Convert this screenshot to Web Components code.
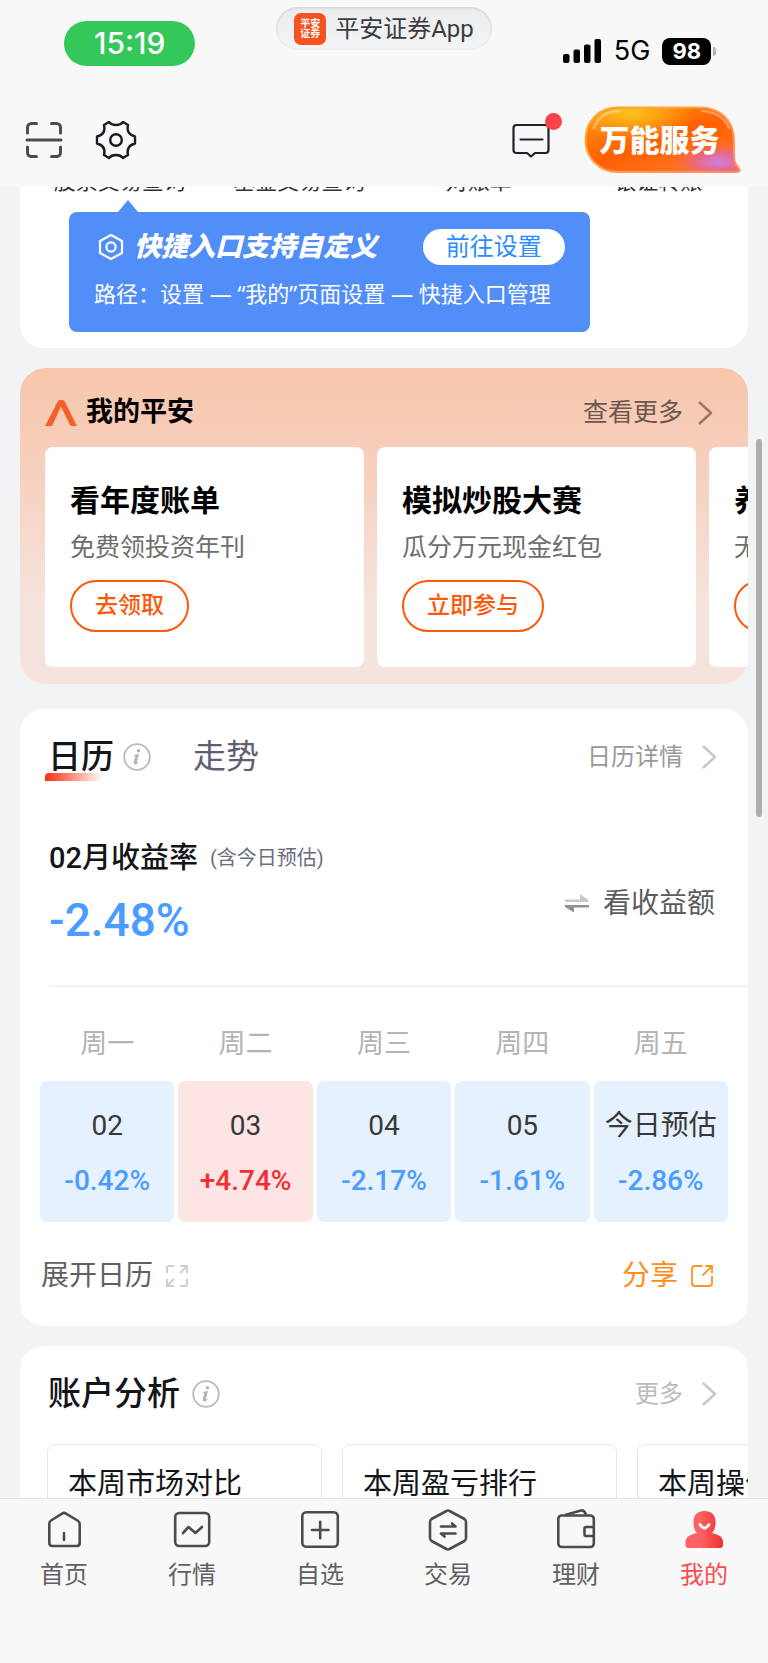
<!DOCTYPE html>
<html lang="zh-CN">
<head>
<meta charset="utf-8">
<meta name="viewport" content="width=device-width, initial-scale=1">
<title>我的</title>
<style>
  body {
    margin: 0;
    background-color: #f2f3f5;
    color: #141519;
    font-family: Roboto, "Noto Sans CJK SC", sans-serif;
    font-size: 24px;
    line-height: 1.5;
    --accent: #fb5a0a;
    --up: #f72d31;
    --down: #4b9cff;
  }
</style>
</head>
<body>
<app-shell>
  <status-bar slot="top" time="15:19" network="5G" battery="98">平安证券App</status-bar>
  <tool-bar slot="top">万能服务</tool-bar>

  <quick-entry>
    <a href="#stock">股票交易查询</a>
    <a href="#fund">基金交易查询</a>
    <a href="#bill">对账单</a>
    <a href="#transfer">银证转账</a>
  </quick-entry>

  <my-pingan>
    <promo-card heading="看年度账单" action="去领取">免费领投资年刊</promo-card>
    <promo-card heading="模拟炒股大赛" action="立即参与">瓜分万元现金红包</promo-card>
    <promo-card heading="养老专区" action="去看看">无忧养老规划</promo-card>
  </my-pingan>

  <profit-calendar></profit-calendar>

  <account-analysis>
    <span>本周市场对比</span>
    <span>本周盈亏排行</span>
    <span>本周操作分析</span>
  </account-analysis>

  <tab-bar slot="bottom">
    <tab-item icon="home">首页</tab-item>
    <tab-item icon="market">行情</tab-item>
    <tab-item icon="watch">自选</tab-item>
    <tab-item icon="trade">交易</tab-item>
    <tab-item icon="wallet">理财</tab-item>
    <tab-item icon="me" active>我的</tab-item>
  </tab-bar>
</app-shell>

<script>
/**
 * Icon markup by name: [width, height, svg content].
 */
const icons = {
  scan: [38, 38, `<g fill="none" stroke="#4c4c4c" stroke-width="3" stroke-linecap="round">
    <path d="M2.500 12V6.500a4 4 0 0 1 4-4H11.500M26.500 2.500H31.500a4 4 0 0 1 4 4V12M35.500 26v5.500a4 4 0 0 1-4 4H26.500M11.500 35.500H6.500a4 4 0 0 1-4-4V26M2 19H36"/></g>`],
  gear: [42, 42, `<g fill="none" stroke="#1b1c22" stroke-width="2.400" stroke-linejoin="round">
    <path d="M14 3C17 7 25 7 28 3L33 6C31.500 12 34 16 40 17.500V24.500C34 26 31.500 30 33 36L28 39C25 35 17 35 14 39L9 36C10.500 30 8 26 2 24.500V17.500C8 16 10.500 12 9 6Z"/>
    <circle cx="21" cy="21" r="5.800"/></g>`],
  message: [40, 38, `<path fill="none" stroke="#20212c" stroke-width="2.200" stroke-linejoin="round" stroke-linecap="round"
    d="M4.500 4H33.500a3 3 0 0 1 3 3V29a3 3 0 0 1-3 3H23L19 35.500L15 32H4.500a3 3 0 0 1-3-3V7a3 3 0 0 1 3-3ZM8.500 18.500H30.500"/>`],
  signal: [40, 26, `<g fill="#000"><rect x="1" y="16" width="6.500" height="9" rx="2"/><rect x="11.500" y="11.500" width="6.500" height="13.500" rx="2"/>
    <rect x="22" y="6.500" width="6.500" height="18.500" rx="2"/><rect x="32.500" y="1" width="6.500" height="24" rx="2"/></g>`],
  hexagon: [26, 28, `<g fill="none" stroke="#fff" stroke-width="2.200" stroke-linejoin="round">
    <path d="M13 2L24 8V20L13 26L2 20V8Z"/><circle cx="13" cy="14" r="4.600"/></g>`],
  logo: [32, 26, `<path fill="#f4602a" d="M0 26L12.500 2Q13.500 0 15 0H17.500Q19 0 20 2L32 26H26.500Q25.500 26 25 25L16 6.500L7.500 25Q7 26 6 26Z"/>`],
  chevron: [16, 26, `<path fill="none" stroke="currentColor" stroke-width="2.500" stroke-linejoin="round" d="M2 2L14 13L2 24"/>`],
  info: [28, 28, `<circle cx="14" cy="14" r="12.800" fill="none" stroke="#bbb" stroke-width="1.800"/>
    <g fill="#b2b2b2"><circle cx="15.500" cy="7.800" r="1.700"/>
    <path d="M11 12L16 11L13.800 19Q13.500 20.500 15 19L16 18Q15 21.500 12 21.500Q10.200 21.300 10.800 19L12.300 13.300Q12.300 12.600 11 12.800Z"/></g>`],
  swap: [24, 20, `<path fill="#cacaca" d="M0 5.500H15V0L23.500 6V8H0Z"/><path fill="#909090" d="M24 11H0V13L9 18.500V13.500H24Z"/>`],
  expand: [22, 22, `<path fill="none" stroke="#cfcfcf" stroke-width="2" d="M8 1H2.500Q1 1 1 2.500V8M14 1H21V8M21 1L14 8M21 14V19.500Q21 21 19.500 21H14M1 14V21H8M1 21L8 14"/>`],
  share: [22, 22, `<path fill="none" stroke="#ff9324" stroke-width="1.800" d="M11.500 1H4Q1 1 1 4V18Q1 21 4 21H18Q21 21 21 18V11M14.500 1H21V8M21 1L11.500 10.500"/>`],
  home: [42, 42, `<g fill="none" stroke="#4c4c4c" stroke-width="2.600" stroke-linejoin="round" stroke-linecap="round">
    <path d="M6.300 14.500Q6.300 12.500 8 11.500L19.500 4.300Q21 3.400 22.500 4.300L34.500 11.500Q36.700 12.800 36.700 15V34Q36.700 37 33.700 37H9.300Q6.300 37 6.300 34ZM21 24V31"/></g>`],
  market: [42, 42, `<g fill="none" stroke="#4c4c4c" stroke-width="2.600" stroke-linejoin="round" stroke-linecap="round">
    <rect x="4.200" y="4" width="34" height="33" rx="4"/><path d="M12 24L17.500 18L24.500 24L31 18"/></g>`],
  watch: [42, 42, `<g fill="none" stroke="#4c4c4c" stroke-width="2.600" stroke-linecap="round">
    <rect x="3.300" y="3.300" width="35.500" height="34.500" rx="4"/><path d="M13 21H29.500M21.200 12.800V29.200"/></g>`],
  trade: [42, 42, `<g fill="none" stroke="#4c4c4c" stroke-width="2.600" stroke-linejoin="round" stroke-linecap="round">
    <path d="M19.500 2Q21 1 22.500 2L37.500 10Q39 11 39 13V29Q39 31 37.500 32L22.500 40Q21 41 19.500 40L4.500 32Q3 31 3 29V13Q3 11 4.500 10Z"/>
    <path d="M14 17.500H28.500L25 14.500M28.500 24.500H14L17.500 27.500"/></g>`],
  wallet: [42, 42, `<g fill="none" stroke="#4c4c4c" stroke-width="2.600" stroke-linejoin="round">
    <rect x="3.300" y="6.500" width="35.500" height="31.500" rx="3.500"/><path d="M10 6L26 1.500Q29 .8 31 5.500M39 18H31Q29.500 18 29.500 19.500V25.500Q29.500 27 31 27H39"/></g>`],
  me: [42, 42, `<defs><linearGradient id="g"><stop offset=".4" stop-color="#fc6163"/><stop offset="1" stop-color="#f2302f"/></linearGradient></defs>
    <path fill="url(#g)" d="M21.500 2C29 2 32.500 6 32.500 13C32.500 18 31.500 21.500 29 24Q40 26.500 40 32V36Q40 39 37 39H5.500Q2.500 39 2.500 36V32Q2.500 26.500 14 24C11.500 21.500 10.500 18 10.500 13C10.500 6 14 2 21.500 2Z"/>
    <path fill="none" stroke="#fff" stroke-width="2.800" stroke-linecap="round" d="M17 15.500Q21.500 22.500 26 15.500"/>`],
  bubble: [157, 68, `<defs>
      <linearGradient id="base" x1="0" y1="0" x2=".8" y2="1"><stop offset="0" stop-color="#ff9a1a"/><stop offset=".55" stop-color="#ff5f00"/><stop offset="1" stop-color="#ff7a30"/></linearGradient>
      <radialGradient id="gold" cx=".3" cy=".08" r=".42"><stop offset="0" stop-color="#ffc61c"/><stop offset="1" stop-color="#ffb010" stop-opacity="0"/></radialGradient>
      <radialGradient id="violet" cx=".86" cy=".84" r=".32"><stop offset="0" stop-color="#cf7ee2"/><stop offset=".45" stop-color="#e0679f" stop-opacity=".8"/><stop offset="1" stop-color="#ff6a20" stop-opacity="0"/></radialGradient>
      <linearGradient id="rim" x1="0" y1="0" x2="1" y2="1"><stop offset="0" stop-color="#ffa820"/><stop offset=".5" stop-color="#ffa050"/><stop offset="1" stop-color="#ff8a6a"/></linearGradient>
      <path id="shape" d="M34 1.500H116C137 1.500 150 15 150 35V52Q151 59 155.500 63.500Q156 66 152 66H34C15 66 1.500 52 1.500 34C1.500 15 15 1.500 34 1.500Z"/>
    </defs>
    <use href="#shape" fill="url(#base)"/><use href="#shape" fill="url(#gold)"/><use href="#shape" fill="url(#violet)"/>
    <use href="#shape" fill="none" stroke="url(#rim)" stroke-width="2"/>
    <path fill="none" stroke="#fff" stroke-opacity=".35" stroke-width="2.500" stroke-linecap="round" d="M10 22Q16 5 36 5M118 5Q138 6 145 22"/>`]
}

/**
 * Returns the svg markup of an icon.
 *
 * @param {string} name - The key in the icons object.
 * @returns {string} The svg element as a string.
 */
const icon = (name) => {
  const [width, height, content] = icons[name]
  return `<svg width="${width}" height="${height}" viewBox="0 0 ${width} ${height}" aria-hidden="true">${content}</svg>`
}

const reset = `
  :host, * {
    box-sizing: border-box;
  }
  svg {
    display: block;
    flex: none;
  }
  button {
    display: flex;
    align-items: center;
    margin: 0;
    padding: 0;
    border: none;
    background: none;
    color: inherit;
    font: inherit;
    white-space: nowrap;
  }
  a {
    color: inherit;
    text-decoration: none;
    white-space: nowrap;
  }
  h2, h3, p {
    margin: 0;
  }
`

/**
 * Registers a custom element whose shadow root is rendered once.
 *
 * @param {string} name - The tag name.
 * @param {string} css - The styles of the element.
 * @param {Function} render - Gets the element and returns its markup.
 */
const define = (name, css, render) => {
  customElements.define(name, class extends HTMLElement {
    /**
     * Attaches the shadow root and fills it the first time the element is inserted.
     */
    connectedCallback () {
      if (this.shadowRoot) {
        return
      }
      const template = document.createElement('template')
      template.innerHTML = `<style>${reset}${css}</style>${render(this)}`
      this.attachShadow({ mode: 'open' })
        .appendChild(template.content.cloneNode(true))
    }
  })
}

// Page frame: fixed bars at the top and bottom, scrolled content between
define('app-shell', `
  :host {
    display: flex;
    flex-direction: column;
    height: 100vh;
    overflow: hidden;
  }
  header {
    background-color: #f8f8f8;
  }
  main {
    position: relative;
    display: flex;
    flex-direction: column;
    gap: 20px;
    flex: 1;
    min-height: 0;
    padding: 0 20px;
    overflow: hidden;
  }
  #scrollbar {
    position: absolute;
    top: 252px;
    right: 6px;
    width: 6px;
    height: 378px;
    border-radius: 3px;
    background-color: #adadaf;
  }
`, () => `
  <header><slot name="top"></slot></header>
  <main><slot></slot><div id="scrollbar"></div></main>
  <slot name="bottom"></slot>
`)

define('status-bar', `
  :host {
    display: grid;
    grid-template-columns: 1fr auto 1fr;
    align-items: start;
    min-height: 93px;
  }
  .side {
    display: flex;
    align-items: center;
    font-family: Inter, sans-serif;
  }
  #time {
    margin: 21px 0 0 64px;
    padding: 0 30px;
    border-radius: 23px;
    background-color: #34c759;
    color: #fff;
    font-size: 30px;
    font-weight: 500;
    line-height: 45px;
  }
  #app {
    gap: 9px;
    margin-top: 7px;
    height: 43px;
    padding: 0 18px;
    border-radius: 22px;
    background: linear-gradient(#ebecee, #f3f4f5);
    box-shadow: inset 0 1px 3px #cfcfd2;
    color: #3c3c3c;
  }
  #logo {
    width: 32px;
    height: 32px;
    padding: 6px;
    border-radius: 7px;
    background-color: #f4521f;
    color: #fff;
    font-size: 10px;
    font-weight: bold;
    line-height: 10px;
    white-space: normal;
  }
  #state {
    justify-content: flex-end;
    gap: 12px;
    padding: 37px 52px 0 0;
    color: #000;
    font-size: 27px;
    line-height: 28px;
  }
  #battery {
    display: flex;
    align-items: center;
    gap: 2px;
  }
  #battery b {
    padding: 0 10px;
    border-radius: 8px;
    background-color: #000;
    color: #fff;
    font-size: 22px;
    line-height: 27px;
  }
  #battery::after {
    content: "";
    width: 3px;
    height: 9px;
    border-radius: 0 3px 3px 0;
    background-color: #b5b5b5;
  }
`, (el) => `
  <div class="side"><span id="time">${el.getAttribute('time')}</span></div>
  <button id="app"><span id="logo">平安证券</span><slot></slot></button>
  <div class="side" id="state">
    ${icon('signal')}
    <span>${el.getAttribute('network')}</span>
    <span id="battery"><b>${el.getAttribute('battery')}</b></span>
  </div>
`)

define('tool-bar', `
  :host {
    display: flex;
    align-items: center;
    gap: 32px;
    height: 94px;
    padding: 0 27px 0 25px;
  }
  #message {
    position: relative;
    margin-left: auto;
  }
  #message::after {
    content: "";
    position: absolute;
    top: -8px;
    right: -10px;
    width: 17px;
    height: 17px;
    border-radius: 50%;
    background-color: #fa4348;
  }
  #service {
    position: relative;
    justify-content: center;
    width: 157px;
    height: 68px;
    padding-right: 6px;
    color: #fff;
    font-size: 30px;
    font-weight: 900;
  }
  #service svg {
    position: absolute;
    inset: 0;
  }
  #service span {
    position: relative;
  }
`, () => `
  <button aria-label="扫一扫">${icon('scan')}</button>
  <button aria-label="设置">${icon('gear')}</button>
  <button id="message" aria-label="消息">${icon('message')}</button>
  <button id="service">${icon('bubble')}<span><slot></slot></span></button>
`)

define('quick-entry', `
  :host {
    display: block;
    flex: none;
    padding-bottom: 16px;
    border-radius: 0 0 24px 24px;
    background-color: #fff;
  }
  /* the labels are scrolled half under the header */
  nav {
    display: grid;
    grid-template-columns: repeat(4, 1fr);
    margin-top: -20px;
    padding-left: 10px;
    color: #333;
    font-size: 22px;
    line-height: 30px;
    text-align: center;
  }
  ::slotted(a) {
    color: inherit;
    text-decoration: none;
  }
  #tip {
    position: relative;
    width: fit-content;
    margin: 15px 0 0 49px;
    padding: 17px 25px 21px;
    border-radius: 8px;
    background-color: #518ef8;
    color: #fff;
  }
  #tip::before {
    content: "";
    position: absolute;
    top: -12px;
    left: 49px;
    border: 10px solid transparent;
    border-top: none;
    border-bottom: 12px solid #518ef8;
  }
  #row {
    display: flex;
    align-items: center;
    gap: 10px;
    padding-left: 4px;
  }
  h3 {
    font-size: 27px;
    font-style: italic;
    font-weight: 900;
    line-height: 36px;
  }
  #row button {
    justify-content: center;
    height: 36px;
    margin-left: auto;
    padding: 0 23px;
    border-radius: 18px;
    background-color: #fff;
    color: #2b8cff;
  }
  p {
    margin-top: 10px;
    padding-right: 14px;
    font-family: "Noto Sans", "Noto Sans CJK SC", sans-serif;
    font-size: 22px;
    line-height: 36px;
    white-space: nowrap;
  }
`, () => `
  <nav><slot></slot></nav>
  <div id="tip">
    <div id="row">${icon('hexagon')}<h3>快捷入口支持自定义</h3><button>前往设置</button></div>
    <p>路径：设置 — “我的”页面设置 — 快捷入口管理</p>
  </div>
`)

define('my-pingan', `
  :host {
    display: block;
    flex: none;
    margin-bottom: 5px;
    padding: 10px 0 17px 25px;
    border-radius: 26px;
    background: linear-gradient(#f8c6ac, #f7cfbc 30%, #f5e4dd 75%);
    overflow: hidden;
  }
  #head {
    display: flex;
    align-items: center;
    gap: 9px;
    height: 69px;
    padding-right: 35px;
  }
  h2 {
    color: #000;
    font-size: 27px;
    font-weight: bold;
  }
  a {
    display: flex;
    align-items: center;
    gap: 14px;
    margin-left: auto;
    color: #6b5750;
    font-size: 25px;
  }
  a svg {
    color: #94786c;
  }
  #track {
    display: flex;
    gap: 13px;
  }
`, () => `
  <div id="head">${icon('logo')}<h2>我的平安</h2><a href="#pingan">查看更多${icon('chevron')}</a></div>
  <div id="track"><slot></slot></div>
`)

define('promo-card', `
  :host {
    display: block;
    flex: 0 0 319px;
    padding: 34px 25px 35px;
    border-radius: 8px;
    background-color: #fff;
    white-space: nowrap;
  }
  h3 {
    color: #000;
    font-size: 30px;
    font-weight: bold;
    line-height: 40px;
  }
  p {
    margin: 10px 0 15px;
    color: #6e6e6e;
    font-size: 25px;
    line-height: 34px;
  }
  button {
    height: 52px;
    padding: 0 23px;
    border: 2px solid var(--accent);
    border-radius: 26px;
    color: var(--accent);
    font-size: 23px;
    font-weight: 500;
  }
`, (el) => `
  <h3>${el.getAttribute('heading')}</h3>
  <p><slot></slot></p>
  <button>${el.getAttribute('action')}</button>
`)

// White card with a title row; "title" and the default slot hold the content
define('section-card', `
  :host {
    display: block;
    flex: none;
    border-radius: 24px;
    background-color: #fff;
    overflow: hidden;
  }
  #head {
    display: flex;
    align-items: center;
    height: 72px;
    padding: 24px 31px 0 28px;
  }
  a {
    display: flex;
    align-items: center;
    gap: 18px;
    margin-left: auto;
    color: var(--more-color, #999);
  }
  a svg {
    color: #c8c8c8;
  }
`, (el) => `
  <div id="head"><slot name="title"></slot><a href="#more">${el.getAttribute('more')}${icon('chevron')}</a></div>
  <slot></slot>
`)

const days = [
  ['周一', '02', '-0.42%'],
  ['周二', '03', '+4.74%'],
  ['周三', '04', '-2.17%'],
  ['周四', '05', '-1.61%'],
  ['周五', '今日预估', '-2.86%']
]

define('profit-calendar', `
  :host {
    display: block;
    flex: none;
  }
  #tabs {
    display: flex;
    align-items: center;
    height: 48px;
    font-size: 33px;
  }
  #tabs [aria-selected] {
    position: relative;
    height: 48px;
    color: #5e6072;
  }
  #tabs [aria-selected="true"] {
    z-index: 0;
    color: #141519;
    font-weight: 500;
  }
  #tabs [aria-selected="true"]::after {
    content: "";
    position: absolute;
    z-index: -1;
    bottom: 0;
    left: -3px;
    width: 58px;
    height: 8px;
    border-radius: 4px 0 0 0;
    background: linear-gradient(90deg, #fc2d0c, #fff);
  }
  #info {
    margin: 0 42px 0 9px;
  }
  #summary {
    display: flex;
    justify-content: space-between;
    align-items: center;
    margin: 57px 0 0 29px;
    padding: 0 33px 37px 0;
    border-bottom: 2px solid #f3f3f5;
  }
  h3 {
    display: flex;
    align-items: center;
    gap: 12px;
    font-size: 29px;
    font-weight: 500;
    line-height: 40px;
  }
  small {
    color: #6c6d7e;
    font-size: 20px;
    font-weight: 400;
  }
  #total {
    margin-top: 14px;
    color: var(--down);
    font-size: 46px;
    font-weight: 500;
    line-height: 56px;
  }
  #swap {
    gap: 14px;
    margin-top: 22px;
    color: #5c5c5c;
    font-size: 28px;
  }
  #week {
    padding: 0 16px;
  }
  table {
    width: 100%;
    table-layout: fixed;
    border-spacing: 4px 0;
    text-align: center;
  }
  th {
    height: 94px;
    padding: 20px 0 0;
    color: #b4b4b4;
    font-size: 27px;
    font-weight: 400;
  }
  td {
    padding: 25px 0 21px;
    border-radius: 7px;
    background-color: #e6f1ff;
    font-size: 28px;
    line-height: 40px;
    white-space: nowrap;
  }
  td span {
    display: block;
    color: #383838;
  }
  td b {
    display: block;
    margin-top: 15px;
    color: var(--down);
    font-weight: 500;
  }
  td.up {
    background-color: #fde5e5;
  }
  td.up b {
    color: var(--up);
  }
  #foot {
    display: flex;
    justify-content: space-between;
    padding: 34px 35px 30px 21px;
    color: #606060;
    font-size: 28px;
    line-height: 40px;
  }
  #foot button {
    gap: 13px;
  }
  #share {
    color: #ff8c1c;
  }
`, () => `
  <section-card more="日历详情">
    <div id="tabs" slot="title" role="tablist">
      <button role="tab" aria-selected="true">日历</button>
      <button id="info" aria-label="日历说明">${icon('info')}</button>
      <button role="tab" aria-selected="false">走势</button>
    </div>
    <div id="summary">
      <div>
        <h3>02月收益率<small>(含今日预估)</small></h3>
        <p id="total">-2.48%</p>
      </div>
      <button id="swap">${icon('swap')}看收益额</button>
    </div>
    <div id="week">
      <table>
        <thead><tr>${days.map(([week]) => `<th scope="col">${week}</th>`).join('')}</tr></thead>
        <tbody><tr>${days.map(([, date, rate]) => `<td class="${rate.startsWith('+') ? 'up' : 'down'}"><span>${date}</span><b>${rate}</b></td>`).join('')}</tr></tbody>
      </table>
    </div>
    <div id="foot">
      <button>展开日历${icon('expand')}</button>
      <button id="share">分享${icon('share')}</button>
    </div>
  </section-card>
`)

define('account-analysis', `
  :host {
    display: block;
    flex: none;
    --more-color: #bbb;
  }
  #title {
    display: flex;
    align-items: center;
    gap: 12px;
  }
  h2 {
    font-size: 33px;
    font-weight: 500;
    line-height: 48px;
  }
  #track {
    display: flex;
    gap: 20px;
    padding: 26px 0 24px 27px;
  }
  ::slotted(span) {
    box-sizing: border-box;
    flex: 0 0 275px;
    min-height: 200px;
    padding: 19px 20px;
    border: 1px solid #e6e6f0;
    border-radius: 8px;
    font-size: 29px;
    line-height: 40px;
    white-space: nowrap;
  }
`, () => `
  <section-card more="更多">
    <div id="title" slot="title"><h2>账户分析</h2><button aria-label="账户分析说明">${icon('info')}</button></div>
    <div id="track"><slot></slot></div>
  </section-card>
`)

define('tab-bar', `
  :host {
    display: block;
  }
  nav {
    display: grid;
    grid-template-columns: repeat(6, 1fr);
    padding: 10px 0 72px;
    border-top: 1px solid #e3e3e7;
    background-color: #f8f8f8;
  }
`, () => '<nav><slot></slot></nav>')

define('tab-item', `
  :host {
    display: block;
    color: #606060;
  }
  :host([active]) {
    color: #fa4b50;
  }
  a {
    display: flex;
    flex-direction: column;
    align-items: center;
    gap: 8px;
    line-height: 32px;
  }
`, (el) => `<a href="#${el.getAttribute('icon')}">${icon(el.getAttribute('icon'))}<span><slot></slot></span></a>`)
</script>
</body>
</html>
